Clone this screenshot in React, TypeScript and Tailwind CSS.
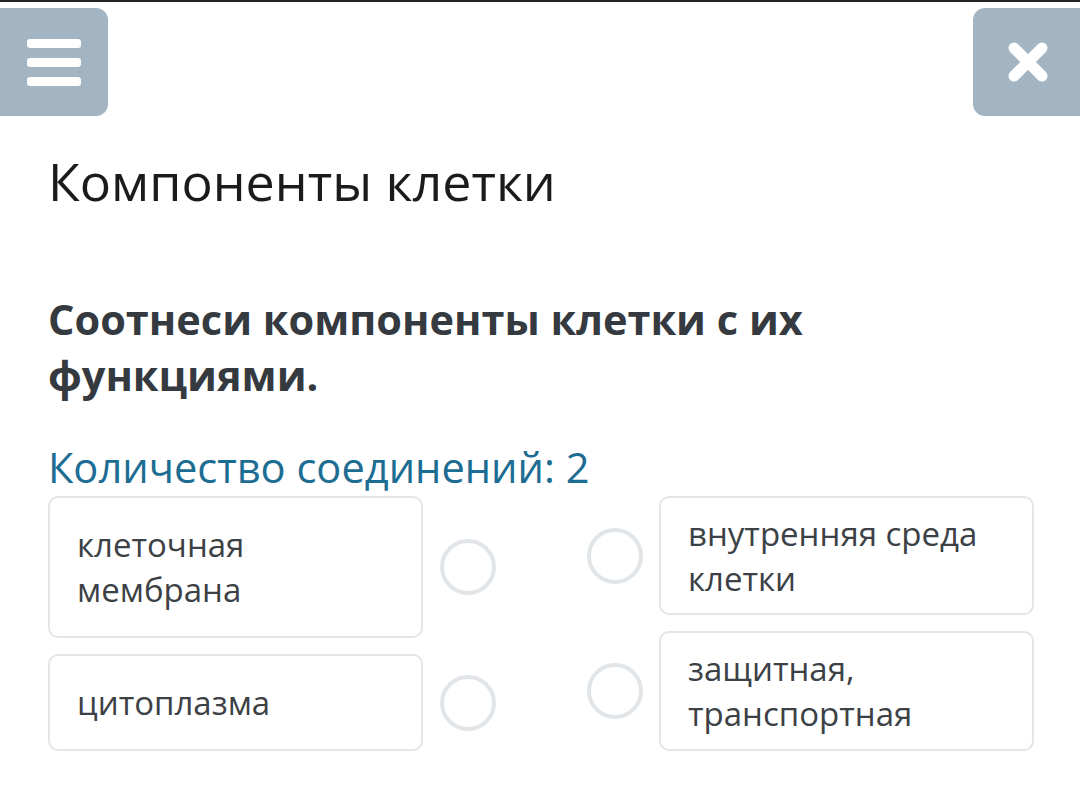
const left = [
  { text: "клеточная мембрана", h: "h-[142px]" },
  { text: "цитоплазма", h: "h-[97px]" },
];

const right = [
  { text: "внутренняя среда клетки", h: "h-[119px]" },
  { text: "защитная, транспортная", h: "h-[120px]" },
];

function Dot() {
  return (
    <div className="h-[56px] w-[56px] shrink-0 rounded-full border-[4px] border-[#e1e5e8] bg-white" />
  );
}

function Card({ text, h }: { text: string; h: string }) {
  return (
    <div
      className={`flex w-[375px] shrink-0 items-center rounded-[10px] border-2 border-[#e3e6e9] bg-white px-[27px] ${h}`}
    >
      <p className="max-w-[310px] text-[33px] leading-[45px] text-[#3c4146]">{text}</p>
    </div>
  );
}

export default function App() {
  return (
    <div
      className="min-h-screen border-t-2 border-[#232323] bg-white"
      style={{ fontFamily: '"Open Sans", "Noto Sans", sans-serif' }}
    >
      <header className="flex items-start justify-between pt-[6px]">
        <button className="flex h-[108px] w-[108px] flex-col items-center justify-center gap-[10px] rounded-r-[12px] bg-[#a3b5c2]">
          <span className="h-[9px] w-[54px] rounded-[3px] bg-white" />
          <span className="h-[9px] w-[54px] rounded-[3px] bg-white" />
          <span className="h-[9px] w-[54px] rounded-[3px] bg-white" />
        </button>
        <button className="flex h-[108px] w-[107px] items-center justify-center rounded-l-[12px] bg-[#a3b5c2] pl-[2px]">
          <svg width="44" height="42" viewBox="0 0 44 42">
            <path
              d="M8 7 L36 35 M36 7 L8 35"
              stroke="#fff"
              strokeWidth="11"
              strokeLinecap="round"
            />
          </svg>
        </button>
      </header>

      <main className="px-[48px]">
        <h1 className="mt-[33px] text-[52px] leading-[64px] text-[#1b1b1b]">Компоненты клетки</h1>

        <h2 className="mt-[78px] max-w-[820px] text-[41.5px] font-bold leading-[56px] text-[#343a40]">
          Соотнеси компоненты клетки с их функциями.
        </h2>

        <p className="mt-[39px] text-[41.6px] leading-[50px] text-[#1d6d93]">Количество соединений: 2</p>

        <div className="mt-[4px] flex justify-between">
          <div className="flex flex-col gap-[16px]">
            {left.map((c) => (
              <div key={c.text} className="flex items-center gap-[17px]">
                <Card text={c.text} h={c.h} />
                <Dot />
              </div>
            ))}
          </div>
          <div className="mr-[-2px] flex flex-col gap-[16px]">
            {right.map((c) => (
              <div key={c.text} className="flex items-center gap-[16px]">
                <Dot />
                <Card text={c.text} h={c.h} />
              </div>
            ))}
          </div>
        </div>
      </main>
    </div>
  );
}
